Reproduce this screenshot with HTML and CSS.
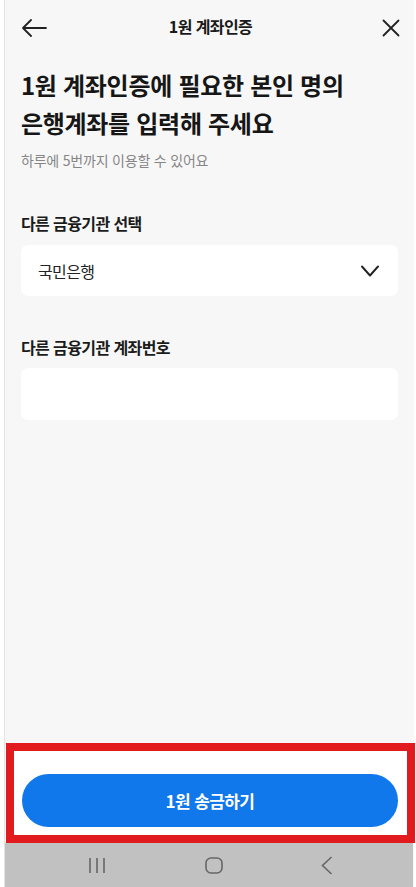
FILE: index.html
```html
<!DOCTYPE html>
<html lang="ko">
<head>
<meta charset="utf-8">
<title>1원 계좌인증</title>
<link rel="stylesheet" href="styles.css">
</head>
<body>
<div class="screen">
  <header class="topbar">
    <button class="icon-btn" aria-label="뒤로">
      <svg width="26" height="18" viewBox="0 0 26 18"><path d="M25 9H2M10 1L2 9l8 8" fill="none" stroke="#222" stroke-width="1.8" stroke-linecap="round" stroke-linejoin="round"/></svg>
    </button>
    <h1 class="title">1원 계좌인증</h1>
    <button class="icon-btn" aria-label="닫기">
      <svg width="18" height="18" viewBox="0 0 18 18"><path d="M1.5 1.5l15 15M16.5 1.5l-15 15" fill="none" stroke="#222" stroke-width="1.8" stroke-linecap="round"/></svg>
    </button>
  </header>

  <main class="content">
    <h2 class="headline">1원 계좌인증에 필요한 본인 명의<br>은행계좌를 입력해 주세요</h2>
    <p class="hint">하루에 5번까지 이용할 수 있어요</p>

    <label class="field-label">다른 금융기관 선택</label>
    <div class="select">
      <span>국민은행</span>
      <svg width="18" height="12" viewBox="0 0 18 12"><path d="M1 1.5l8 9 8-9" fill="none" stroke="#222" stroke-width="1.9" stroke-linecap="round" stroke-linejoin="round"/></svg>
    </div>

    <label class="field-label second">다른 금융기관 계좌번호</label>
    <div class="input"></div>
  </main>

  <footer class="footer">
    <button class="primary">1원 송금하기</button>
  </footer>

  <nav class="sysnav">
    <svg width="18" height="17" viewBox="0 0 18 17"><path d="M2 1v15M9 1v15M16 1v15" stroke="#666" stroke-width="1.6"/></svg>
    <svg width="18" height="17" viewBox="0 0 18 17"><rect x="1" y="1" width="16" height="15" rx="5" fill="none" stroke="#666" stroke-width="1.6"/></svg>
    <svg width="12" height="19" viewBox="0 0 12 19"><path d="M10.5 1L1.5 9.5l9 8.5" fill="none" stroke="#666" stroke-width="1.6"/></svg>
  </nav>
</div>
<div class="highlight"></div>
</body>
</html>
```

FILE: styles.css
```css
* { box-sizing: border-box; margin: 0; padding: 0; }

html, body {
  width: 416px;
  height: 887px;
  background: #ffffff;
  overflow: hidden;
}

body {
  position: relative;
  font-family: "Noto Sans CJK KR", "Noto Sans", sans-serif;
  color: #1e1e1e;
}

.screen {
  margin-left: 4px;
  width: 410px;
  height: 887px;
  border-left: 1px solid #e4e4e4;
  background: #f7f7f7;
  display: flex;
  flex-direction: column;
}

.topbar {
  height: 56px;
  display: flex;
  align-items: center;
  justify-content: space-between;
  padding: 0 14px 0 16px;
}

.icon-btn {
  border: 0;
  background: none;
  display: flex;
  align-items: center;
  width: 28px;
  height: 28px;
}
.icon-btn:last-child { justify-content: flex-end; }

.title {
  font-size: 16px;
  font-weight: 700;
  letter-spacing: -0.6px;
  margin-top: -4px;
  color: #1a1a1a;
}

.content {
  flex: 1;
  padding: 10px 16px 0 16px;
  display: flex;
  flex-direction: column;
}

.headline {
  font-size: 24px;
  font-weight: 700;
  line-height: 38px;
  letter-spacing: -0.3px;
  color: #161616;
}

.hint {
  margin-top: 8px;
  font-size: 14px;
  line-height: 20px;
  letter-spacing: -0.2px;
  color: #868686;
}

.field-label {
  margin-top: 41px;
  font-size: 16px;
  font-weight: 700;
  line-height: 24px;
  letter-spacing: -0.6px;
  color: #1b1b1b;
}
.field-label.second { margin-top: 39px; }

.select,
.input {
  margin-top: 10px;
  height: 51px;
  background: #ffffff;
  border-radius: 7px;
}

.select {
  display: flex;
  align-items: center;
  justify-content: space-between;
  padding: 0 19px 0 17px;
  font-size: 16px;
  letter-spacing: -0.6px;
  color: #222;
}

.input {
  margin-top: 9px;
  height: 52px;
}

.footer {
  height: 95px;
  background: #ffffff;
  padding: 26px 15px 0 17px;
  margin-right: -3px;
}

.primary {
  width: 376px;
  height: 53px;
  border: 0;
  border-radius: 27px;
  background: #1178eb;
  color: #ffffff;
  font-family: inherit;
  font-size: 17px;
  font-weight: 700;
  letter-spacing: -0.6px;
}

.sysnav {
  height: 44px;
  width: 408px;
  background: #c1c1c1;
  display: flex;
  align-items: center;
  justify-content: space-between;
  padding: 0 80px 0 83px;
}

/* red outline marking the submit area */
.highlight {
  position: absolute;
  left: 6px;
  top: 743px;
  width: 409px;
  height: 100px;
  border: 8px solid #e21b1e;
  pointer-events: none;
}
```
